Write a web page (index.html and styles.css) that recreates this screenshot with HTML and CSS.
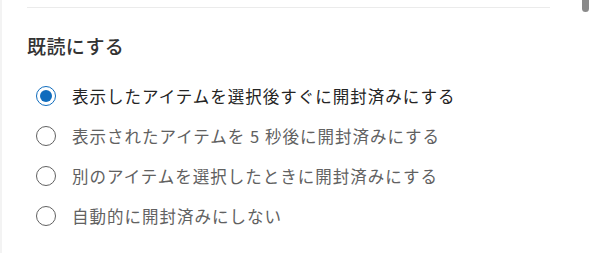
FILE: index.html
```html
<!DOCTYPE html>
<html lang="ja">
<head>
<meta charset="utf-8">
<link rel="stylesheet" href="styles.css">
</head>
<body>
<div class="page">
  <div class="panel">
    <div class="divider"></div>
    <h2 class="heading">既読にする</h2>
    <div class="options" role="radiogroup">
      <label class="option selected"><span class="radio"><span class="dot"></span></span><span class="label">表示したアイテムを選択後すぐに開封済みにする</span></label>
      <label class="option"><span class="radio"></span><span class="label">表示されたアイテムを 5 秒後に開封済みにする</span></label>
      <label class="option"><span class="radio"></span><span class="label">別のアイテムを選択したときに開封済みにする</span></label>
      <label class="option"><span class="radio"></span><span class="label">自動的に開封済みにしない</span></label>
    </div>
  </div>
  <div class="scrollbar"><div class="thumb"></div></div>
</div>
</body>
</html>
```
FILE: styles.css
```css
html, body {
  margin: 0;
  padding: 0;
  background: #ffffff;
}
body {
  font-family: "Noto Sans CJK JP", "Noto Sans", sans-serif;
  width: 594px;
  height: 253px;
  overflow: hidden;
}
.page {
  display: flex;
  height: 253px;
  border-left: 2px solid #f3f3f3;
  box-sizing: border-box;
}
.panel {
  flex: 1;
  padding: 0 0 0 25px;
}
.divider {
  margin-top: 7px;
  width: 523px;
  height: 1px;
  background: #ebebeb;
}
.heading {
  margin: 25px 0 0 0;
  font-size: 19px;
  line-height: 26px;
  font-weight: 500;
  color: #333333;
  letter-spacing: 0.4px;
}
.options {
  margin-top: 25px;
  display: flex;
  flex-direction: column;
  gap: 16px;
}
.option {
  display: flex;
  align-items: center;
  height: 24px;
  padding-left: 9px;
}
.radio {
  width: 20px;
  height: 20px;
  box-sizing: border-box;
  border: 1px solid #616161;
  border-radius: 50%;
  display: flex;
  align-items: center;
  justify-content: center;
  flex: none;
}
.option.selected .radio {
  border-color: #0f6cbd;
}
.dot {
  width: 12px;
  height: 12px;
  border-radius: 50%;
  background: #0f6cbd;
}
.label {
  margin-left: 16px;
  font-size: 16.5px;
  letter-spacing: 1px;
  color: #616161;
  white-space: nowrap;
}
.option.selected .label {
  color: #242424;
}
.scrollbar {
  width: 12px;
  flex: none;
  margin-right: 3px;
  display: flex;
  justify-content: center;
}
.thumb {
  width: 7px;
  height: 12px;
  background: #8a8a8a;
  border-radius: 0 0 4px 4px;
}
```
